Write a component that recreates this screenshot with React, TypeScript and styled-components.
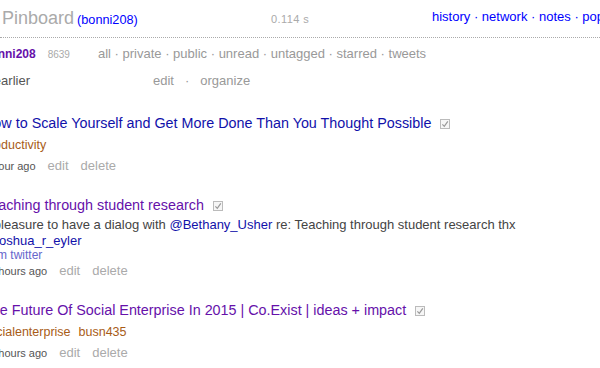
import React from "react";
import styled, { createGlobalStyle } from "styled-components";

const GlobalStyle = createGlobalStyle`
  html, body {
    margin: 0;
    padding: 0;
    background: #fff;
  }
  body {
    font-family: "Liberation Sans", Arial, Helvetica, sans-serif;
    overflow: hidden;
  }
`;

const Page = styled.div`
  width: 600px;
  height: 368px;
  overflow: hidden;
  white-space: nowrap;
`;

const Header = styled.div`
  display: flex;
  align-items: flex-start;
  height: 37px;
  padding-left: 2px;
  border-bottom: 1px dotted #aaa;

  > * {
    flex-shrink: 0;
  }
`;

const Brand = styled.div`
  width: 269px;
  margin-top: 7px;
  line-height: 22px;
  font-size: 18px;
  color: #aaa;

  a {
    margin-left: 3px;
    font-size: 12.7px;
    color: #00f;
    text-decoration: none;
  }
`;

const Timing = styled.div`
  width: 161px;
  margin-top: 13px;
  font-size: 11px;
  line-height: 12px;
  letter-spacing: 0.4px;
  color: #aaa;
`;

const TopNav = styled.div`
  margin-top: 9px;
  font-size: 13px;
  line-height: 16px;
  color: #00f;

  a {
    color: #00f;
    text-decoration: none;
  }
`;

const Main = styled.div`
  margin-left: -17px;
`;

const UserRow = styled.div`
  display: flex;
  align-items: baseline;
  margin-top: 8px;
  height: 16px;
  line-height: 16px;
  font-size: 13px;
`;

const UserName = styled.a`
  font-size: 12px;
  font-weight: bold;
  color: #6611aa;
  text-decoration: none;
`;

const Count = styled.span`
  margin-left: 12px;
  font-size: 10px;
  color: #aaa;
`;

const Filters = styled.div`
  margin-left: 28px;
  color: #999;

  a {
    color: #999;
    text-decoration: none;
  }
`;

const PagerRow = styled.div`
  display: flex;
  align-items: baseline;
  margin-top: 11px;
  height: 16px;
  line-height: 16px;
  font-size: 13px;
`;

const Earlier = styled.a`
  width: 170px;
  color: #555;
  text-decoration: none;
`;

const PagerLink = styled.a`
  color: #999;
  text-decoration: none;
`;

const Dot = styled.span`
  margin: 0 11px;
  color: #999;
`;

const List = styled.div`
  margin-top: 26px;
  display: flex;
  flex-direction: column;
  gap: 23px;
`;

const Bookmark = styled.div``;

const TitleLine = styled.div`
  display: flex;
  align-items: baseline;
  line-height: 17px;
`;

const Title = styled.a<{ $visited?: boolean }>`
  font-size: 14.35px;
  color: ${(p) => (p.$visited ? "#6611aa" : "#1111aa")};
  text-decoration: none;
`;

const Check = styled.svg`
  margin-left: 9px;
  width: 10px;
  height: 10px;
  align-self: baseline;
  position: relative;
  top: 1px;
`;

const Description = styled.div`
  margin-top: 3px;
  max-width: 560px;
  white-space: normal;
  font-size: 13px;
  line-height: 15.5px;
  color: #444;

  a {
    color: #1111aa;
    text-decoration: none;
  }
`;

const Via = styled.a`
  display: block;
  font-size: 12px;
  line-height: 15px;
  color: #6666cc;
  text-decoration: none;
`;

const Tags = styled.div`
  display: flex;
  gap: 8px;
  margin-top: 5px;
  line-height: 16px;
  font-size: 12.5px;
`;

const Tag = styled.a`
  color: #a85c17;
  text-decoration: none;
`;

const Meta = styled.div<{ $tight?: boolean }>`
  display: flex;
  align-items: baseline;
  gap: 12px;
  margin-top: ${(p) => (p.$tight ? "0" : "5px")};
  line-height: 15px;
  font-size: 13px;
`;

const When = styled.span`
  font-size: 11px;
  color: #555;
`;

const Action = styled.a`
  color: #aaa;
  text-decoration: none;
`;

const CheckIcon = () => (
  <Check viewBox="0 0 10 10">
    <rect x="0.5" y="0.5" width="9" height="9" fill="#f6f6f6" stroke="#bbb" />
    <path d="M2.4 5.4 L4.3 7.4 L7.8 2.4" fill="none" stroke="#999" strokeWidth="1.2" />
  </Check>
);

type Item = {
  title: string;
  visited?: boolean;
  description?: React.ReactNode;
  via?: string;
  tags: string[];
  when: string;
};

const items: Item[] = [
  {
    title: "How to Scale Yourself and Get More Done Than You Thought Possible",
    tags: ["productivity"],
    when: "1 hour ago",
  },
  {
    title: "Teaching through student research",
    visited: true,
    description: (
      <>
        a pleasure to have a dialog with <a href="#">@Bethany_Usher</a> re: Teaching through student research thx{" "}
        <a href="#">@joshua_r_eyler</a>
      </>
    ),
    via: "from twitter",
    tags: [],
    when: "12 hours ago",
  },
  {
    title: "The Future Of Social Enterprise In 2015 | Co.Exist | ideas + impact",
    visited: true,
    tags: ["socialenterprise", "busn435"],
    when: "12 hours ago",
  },
];

const filters = ["all", "private", "public", "unread", "untagged", "starred", "tweets"];
const navLinks = ["history", "network", "notes", "popular", "tour", "howto", "log out"];

export default function App() {
  return (
    <Page>
      <GlobalStyle />
      <Header>
        <Brand>
          Pinboard<a href="#">(bonni208)</a>
        </Brand>
        <Timing>0.114 s</Timing>
        <TopNav>
          {navLinks.map((l, i) => (
            <React.Fragment key={l}>
              {i > 0 && " · "}
              <a href="#">{l}</a>
            </React.Fragment>
          ))}
        </TopNav>
      </Header>
      <Main>
        <UserRow>
          <UserName href="#">bonni208</UserName>
          <Count>8639</Count>
          <Filters>
            {filters.map((f, i) => (
              <React.Fragment key={f}>
                {i > 0 && " · "}
                <a href="#">{f}</a>
              </React.Fragment>
            ))}
          </Filters>
        </UserRow>
        <PagerRow>
          <Earlier href="#">« earlier</Earlier>
          <PagerLink href="#">edit</PagerLink>
          <Dot>·</Dot>
          <PagerLink href="#">organize</PagerLink>
        </PagerRow>
        <List>
          {items.map((it) => (
            <Bookmark key={it.title}>
              <TitleLine>
                <Title href="#" $visited={it.visited}>
                  {it.title}
                </Title>
                <CheckIcon />
              </TitleLine>
              {it.description && <Description>{it.description}</Description>}
              {it.via && <Via href="#">{it.via}</Via>}
              {it.tags.length > 0 && (
                <Tags>
                  {it.tags.map((t) => (
                    <Tag href="#" key={t}>
                      {t}
                    </Tag>
                  ))}
                </Tags>
              )}
              <Meta $tight={!!it.via}>
                <When>{it.when}</When>
                <Action href="#">edit</Action>
                <Action href="#">delete</Action>
              </Meta>
            </Bookmark>
          ))}
        </List>
      </Main>
    </Page>
  );
}
